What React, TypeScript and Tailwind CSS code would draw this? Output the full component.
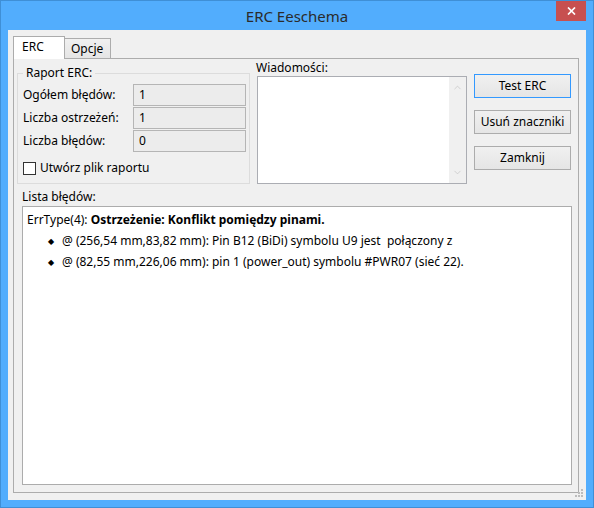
import { ChevronUp, ChevronDown } from "lucide-react";

const font = "font-['Noto_Sans','Liberation_Sans',sans-serif]";

function ReadOnlyField({ value }: { value: string }) {
  return (
    <div className="h-[22px] w-[113px] border border-[#b5b5b5] bg-[#ececec] pl-[5px] text-[12px] leading-[20px] text-black">
      {value}
    </div>
  );
}

function DialogButton({ label, focused }: { label: string; focused?: boolean }) {
  return (
    <button
      className={
        "h-[24px] w-[97px] border bg-gradient-to-b from-[#f0f0f0] to-[#e5e5e5] text-[12px] leading-[20px] text-black " +
        (focused ? "border-[#3399ff]" : "border-[#acacac]")
      }
    >
      {label}
    </button>
  );
}

const stats = [
  { label: "Ogółem błędów:", value: "1" },
  { label: "Liczba ostrzeżeń:", value: "1" },
  { label: "Liczba błędów:", value: "0" },
];

const markers = [
  "@ (256,54 mm,83,82 mm): Pin B12 (BiDi) symbolu U9 jest  połączony z",
  "@ (82,55 mm,226,06 mm): pin 1 (power_out) symbolu #PWR07 (sieć 22).",
];

export default function App() {
  return (
    <div className={"flex h-[508px] w-[594px] flex-col border border-[#3f8fd6] bg-[#52adfd] " + font}>
      {/* title bar */}
      <div className="grid h-[29px] grid-cols-[1fr_auto_1fr] items-center">
        <div />
        <div className="text-[15px] leading-[20px] text-[#2b2b2b]">ERC Eeschema</div>
        <div className="mr-[7px] self-start justify-self-end">
          <div className="flex h-[20px] w-[30px] items-center justify-center bg-[#c75050]">
            <svg width="9" height="8" viewBox="0 0 9 8">
              <path d="M1 0.5 L8 7.5 M8 0.5 L1 7.5" stroke="#fff" strokeWidth="1.7" />
            </svg>
          </div>
        </div>
      </div>

      {/* client area */}
      <div className="relative mx-[7px] mb-[7px] flex flex-1 flex-col bg-[#f0f0f0] pl-[5px] pr-[7px] pt-[6px] pb-[7px] text-[12px] text-black">
        {/* tabs */}
        <div className="flex items-end">
          <div className="relative z-10 -mb-px h-[23px] w-[52px] border border-b-0 border-[#acacac] bg-white pl-[8px] leading-[20px]">
            ERC
          </div>
          <div className="h-[20px] w-[46px] border border-l-0 border-b-0 border-[#acacac] bg-gradient-to-b from-[#f0f0f0] to-[#e5e5e5] pl-[6px] leading-[19px]">
            Opcje
          </div>
        </div>

        {/* tab panel */}
        <div className="flex flex-1 flex-col border border-[#acacac] bg-[#f0f0f0]">
          <div className="flex items-start pl-[3px] pr-[7px]">
            {/* Raport ERC group */}
            <fieldset className="mt-[6px] h-[119px] w-[235px] border border-[#dcdcdc] pl-[5px] pr-[3px]">
              <legend className="px-[3px] text-[12px] leading-[16px]">Raport ERC:</legend>
              <div className="mt-[3px] flex flex-col gap-[1px]">
                {stats.map((s) => (
                  <div key={s.label} className="flex items-center justify-between">
                    <span className="leading-[16px]">{s.label}</span>
                    <ReadOnlyField value={s.value} />
                  </div>
                ))}
              </div>
              <label className="mt-[8px] flex items-center gap-[4px]">
                <span className="h-[13px] w-[13px] border border-[#333] bg-white" />
                <span className="leading-[16px]">Utwórz plik raportu</span>
              </label>
            </fieldset>

            {/* messages */}
            <div className="ml-[6px] mt-[1px] flex flex-col">
              <span className="leading-[16px]">Wiadomości:</span>
              <div className="ml-px flex h-[108px] w-[210px] border border-[#abadb3] bg-white">
                <div className="flex-1" />
                <div className="flex w-[17px] flex-col items-center justify-between bg-[#f0f0f0] py-[5px]">
                  <ChevronUp size={11} strokeWidth={1.5} color="#c2c2c2" />
                  <ChevronDown size={11} strokeWidth={1.5} color="#c2c2c2" />
                </div>
              </div>
            </div>

            {/* buttons */}
            <div className="ml-[7px] mt-[15px] flex flex-col gap-[12px]">
              <DialogButton label="Test ERC" focused />
              <DialogButton label="Usuń znaczniki" />
              <DialogButton label="Zamknij" />
            </div>
          </div>

          <div className="mt-[5px] pl-[8px] leading-[16px]">Lista błędów:</div>
          <div className="mb-[7px] ml-[8px] mr-[6px] mt-[1px] flex-1 border border-[#acacac] bg-white pl-[4px] pt-[2px]">
            <div className="leading-[21px]">
              ErrType(4): <span className="font-bold">Ostrzeżenie: Konflikt pomiędzy pinami.</span>
            </div>
            {markers.map((m) => (
              <div key={m} className="flex items-center leading-[21px]">
                <span className="ml-[21px] w-[14px] text-[8px]">◆</span>
                <span className="whitespace-pre">{m}</span>
              </div>
            ))}
          </div>
        </div>

        {/* size grip */}
        <svg className="absolute bottom-[2px] right-[2px]" width="9" height="9" viewBox="0 0 9 9">
          <rect x="6" y="0" width="2" height="2" fill="#bcbcbc" />
          <rect x="3" y="3" width="2" height="2" fill="#bcbcbc" />
          <rect x="6" y="3" width="2" height="2" fill="#bcbcbc" />
          <rect x="0" y="6" width="2" height="2" fill="#bcbcbc" />
          <rect x="3" y="6" width="2" height="2" fill="#bcbcbc" />
          <rect x="6" y="6" width="2" height="2" fill="#bcbcbc" />
        </svg>
      </div>
    </div>
  );
}
